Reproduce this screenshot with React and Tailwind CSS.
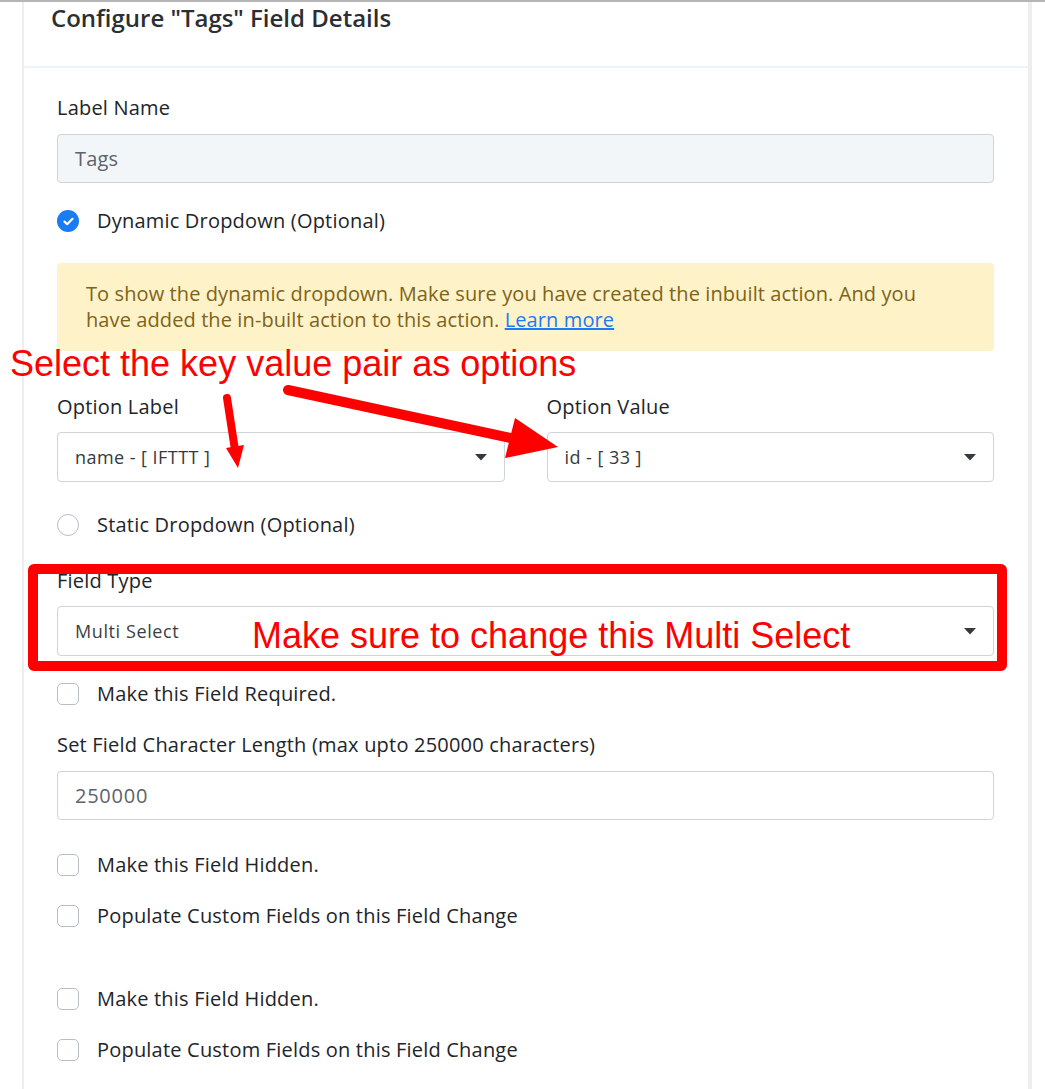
import React from 'react';

const ui = { fontFamily: '"Open Sans", Lato, sans-serif' };
const red = { fontFamily: '"Liberation Sans", Arial, sans-serif' };

function Caret() {
  return (
    <svg width="12" height="7" viewBox="0 0 12 7" className="shrink-0">
      <path d="M0 0 L12 0 L6 6.5 Z" fill="#343a40" />
    </svg>
  );
}

function Select({ value, small, className = '' }) {
  return (
    <div className={`flex h-[50px] items-center justify-between rounded-[4px] border border-[#ced4da] bg-white pl-[17px] pr-[17px] ${className}`}>
      <span className={small ? 'text-[18px] tracking-[0.6px] text-[#3a3f44]' : 'text-[18px] tracking-[0.45px] text-[#343a40]'}>{value}</span>
      <Caret />
    </div>
  );
}

function Check({ label, className = '' }) {
  return (
    <div className={`flex h-[24px] items-center ${className}`}>
      <span className="h-[22px] w-[22px] shrink-0 rounded-[5px] border border-[#b7bec8] bg-white" />
      <span className="ml-[18px] text-[20px] tracking-[0.2px] text-[#212529]">{label}</span>
    </div>
  );
}

export default function App() {
  return (
    <div className="relative h-[1089px] w-[1045px] overflow-hidden border-t-2 border-[#b5b5b5] bg-white" style={ui}>
      <div className="ml-[22px] h-full w-[1010px] border-l-2 border-r-4 border-l-[#eceef2] border-r-[#eceef2] bg-white">
        {/* Header */}
        <div className="h-[66px] border-b-2 border-[#edf4fc] pl-[27px]">
          <h1 className="text-[24px] font-semibold leading-[32px] text-[#2b2f33]">Configure "Tags" Field Details</h1>
        </div>

        {/* Body */}
        <div className="pl-[33px] pr-[34px] text-[20px] tracking-[0.2px]">
          <div className="mt-[28px] h-[24px] leading-[24px] text-[#212529]">Label Name</div>
          <div className="mt-[14px] flex h-[49px] items-center rounded-[4px] border border-[#ced4da] bg-[#f3f6f9] pl-[17px] text-[#5c636a]">
            Tags
          </div>

          <div className="mt-[26px] flex h-[24px] items-center">
            <span className="flex h-[22px] w-[22px] shrink-0 items-center justify-center rounded-full bg-[#1a7cf4]">
              <svg width="11" height="9" viewBox="0 0 11 9">
                <path d="M1.5 4.6 L4.2 7.2 L9.5 1.8" fill="none" stroke="white" strokeWidth="2.2" strokeLinecap="round" strokeLinejoin="round" />
              </svg>
            </span>
            <span className="ml-[18px] text-[#212529]">Dynamic Dropdown (Optional)</span>
          </div>

          <div className="mt-[30px] h-[88px] rounded-[4px] bg-[#fef2c9] px-[29px] pt-[18px] leading-[26px] tracking-[0.1px] text-[#7f6318]">
            To show the dynamic dropdown. Make sure you have created the inbuilt action. And you
            <br />
            have added the in-built action to this action. <span className="text-[#1a7cf4] underline">Learn more</span>
          </div>

          <div className="mt-[44px] grid grid-cols-2 gap-x-[42px]">
            <div>
              <div className="h-[24px] leading-[24px] text-[#212529]">Option Label</div>
              <Select value="name - [ IFTTT ]" className="mt-[13px]" />
            </div>
            <div>
              <div className="h-[24px] leading-[24px] text-[#212529]">Option Value</div>
              <Select value="id - [ 33 ]" className="mt-[13px]" />
            </div>
          </div>

          <div className="mt-[31px] flex h-[24px] items-center">
            <span className="h-[22px] w-[22px] shrink-0 rounded-full border border-[#b7bec8] bg-white" />
            <span className="ml-[18px] text-[#212529]">Static Dropdown (Optional)</span>
          </div>

          <div className="mt-[32px] h-[24px] leading-[24px] text-[#212529]">Field Type</div>
          <Select value="Multi Select" small className="mt-[13px]" />

          <Check label="Make this Field Required." className="mt-[26px]" />

          <div className="mt-[27px] h-[24px] leading-[24px] text-[#212529]">Set Field Character Length (max upto 250000 characters)</div>
          <div className="mt-[14px] flex h-[49px] items-center rounded-[4px] border border-[#ced4da] bg-white pl-[17px] tracking-[0.75px] text-[#5c636a]">
            250000
          </div>

          <Check label="Make this Field Hidden." className="mt-[33px]" />
          <Check label="Populate Custom Fields on this Field Change" className="mt-[27px]" />
          <Check label="Make this Field Hidden." className="mt-[59px]" />
          <Check label="Populate Custom Fields on this Field Change" className="mt-[27px]" />
        </div>
      </div>

      {/* Annotations */}
      <div className="absolute left-[28px] top-[562px] h-[107px] w-[979px] rounded-[6px] border-[10px] border-[#ff0000]" />
      <div className="absolute left-[10px] top-[341px] text-[36px] leading-[42px] text-[#ff0000]" style={red}>
        Select the key value pair as options
      </div>
      <div className="absolute left-[252px] top-[613px] text-[36px] leading-[42px] text-[#ff0000]" style={red}>
        Make sure to change this Multi Select
      </div>
      <svg className="pointer-events-none absolute left-0 top-0" width="1045" height="1089">
        <line x1="227" y1="396" x2="235" y2="448" stroke="#ff0000" strokeWidth="8" strokeLinecap="round" />
        <polygon points="226,446 244,443 238,466" fill="#ff0000" />
        <line x1="288" y1="388" x2="515" y2="437" stroke="#ff0000" strokeWidth="10" strokeLinecap="round" />
        <polygon points="515,416 505,456 558,445" fill="#ff0000" />
      </svg>
    </div>
  );
}
